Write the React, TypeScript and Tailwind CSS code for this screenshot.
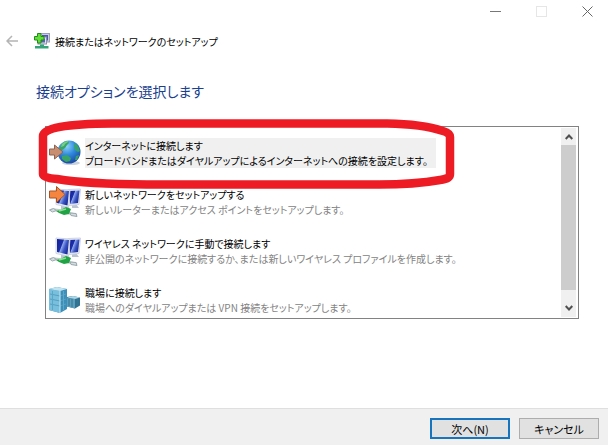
import type { ReactNode } from "react";

function NetworkPlusIcon() {
  return (
    <svg className="h-4 w-4" viewBox="0 0 16 16" aria-hidden="true">
      <rect x="6" y="0.5" width="9.5" height="8.5" fill="#c9cede" stroke="#9a9fb8" />
      <rect x="8" y="2" width="6" height="5.5" fill="#4c55b4" />
      <rect x="4" y="4" width="8.5" height="7" fill="#dfe3ee" stroke="#8a90a8" />
      <rect x="5" y="5.5" width="6" height="4" fill="#5660ba" />
      <path d="M6 11.500h4V13h4.500v2.500H1V13h5z" fill="#35a379" />
      <path d="M3.500.5h3.500v3h3v3.500H7v3H3.500V7h-3V3.500h3z" fill="#63dd39" stroke="#218a1c" />
    </svg>
  );
}

function GlobeIcon() {
  return (
    <svg className="h-8 w-8" viewBox="0 0 32 32" aria-hidden="true">
      <defs>
        <radialGradient id="globe" cx="0.4" cy="0.25" r="0.75">
          <stop offset="0" stopColor="#8fd3f6" />
          <stop offset="0.5" stopColor="#2f8ade" />
          <stop offset="1" stopColor="#1c4aa6" />
        </radialGradient>
      </defs>
      <ellipse cx="22" cy="26" rx="9" ry="2" fill="#c9d3de" />
      <circle cx="20" cy="15" r="11.500" fill="url(#globe)" />
      <path d="M12 8q3-4 7-4l1 2-2 2-2 3-3 2-3 0zM26 6l3 3 2 5-2 1-3-2-1-4zM13 19l5-1 4 3-1 3-4 1-4-3zM27 19l3-1-2 5-2 0z" fill="#38a466" />
      <path d="M13 7q3-3 6-3l0 1-3 2-1 2-3 1z" fill="#75cf86" />
      <path d="M.5 12h5V8l8.500 7-8.500 7v-4h-5z" fill="#c98d70" stroke="#8d6352" />
    </svg>
  );
}

function MonitorsIcon({ arrow = false }: { arrow?: boolean }) {
  return (
    <svg className="h-8 w-8" viewBox="0 -1 32 32" aria-hidden="true">
      <defs>
        <linearGradient id="screen" x1="0" y1="0" x2="1" y2="0.5">
          <stop offset="0" stopColor="#14209a" />
          <stop offset="0.45" stopColor="#1b2ea8" />
          <stop offset="0.52" stopColor="#8ea6ea" />
          <stop offset="0.75" stopColor="#3a55c4" />
          <stop offset="1" stopColor="#1c2f9c" />
        </linearGradient>
      </defs>
      <path d="M23 17h4l3 4h-7z" fill="#b9c3d2" />
      <path d="M19 2.500l12.500-.5-1.500 15.500-10 1z" fill="#e6eaf4" stroke="#cdd4e2" />
      <path d="M20 4l10.500-.5L29 16l-8 1z" fill="url(#screen)" />
      <path d="M12 18h6l3 4h-9z" fill="#b9c3d2" />
      <path d="M7 2l14 1-1.500 17L7 17.500z" fill="#eef1f8" stroke="#cdd4e2" />
      <path d="M8 3l12 1-1.500 14.500L8 16z" fill="url(#screen)" />
      <path d="M2 23q9-1 17 3l9 2" fill="none" stroke="#bfccc7" strokeWidth="2.500" />
      <path d="M7 24l5-1 5-3 5 2-2 5-5 1-5-2z" fill="#21a345" />
      <path d="M10 24l7-2" stroke="#8be391" strokeWidth="1.500" />
      <path d="M.5 23l4-1.500 3 2-4 1.500zM21 26l6 .5 1 3-6-1z" fill="#d5dde0" stroke="#9aa8b0" />
      {arrow && <path d="M.5 4h7V-.5l8.500 8-8.500 8V11h-7z" fill="#f5853f" stroke="#a5552c" />}
    </svg>
  );
}

function ServersIcon() {
  return (
    <svg className="h-8 w-8" viewBox="0 -2 32 32" aria-hidden="true">
      <path d="M18 11l6-1 7 1.500v8l-5 3-8-2z" fill="#2f7292" />
      <path d="M18 12l8 1v9.500l-8-2z" fill="#5a9fbd" />
      <path d="M18 11.500l6-1.500 7 1.500-5 1.500z" fill="#add7e5" />
      <path d="M20 13v7M23 13v8M28.500 13v7" stroke="#37748f" />
      <path d="M0 3l8-2 10 2v20l-7 4-11-3z" fill="#3b8fb9" />
      <path d="M0 3l11 2v22l-11-3z" fill="#78bfde" />
      <path d="M0 3l8-2 10 2-7 2z" fill="#c2e4f1" />
      <path d="M1 8l10 2 6-2M1 13l10 2 6-2M1 18l10 2 6-2" fill="none" stroke="#579fc0" />
      <path d="M3.500 5v19M14.500 5v19" stroke="#5ca6c6" />
      <path d="M11 5v22" stroke="#c6e7f1" />
    </svg>
  );
}

type Option = { title: string; description: string; icon: ReactNode; selected?: boolean };

const options: Option[] = [
  {
    title: "インターネットに接続します",
    description: "ブロードバンドまたはダイヤルアップによるインターネットへの接続を設定します。",
    icon: <GlobeIcon />,
    selected: true,
  },
  {
    title: "新しいネットワークをセットアップする",
    description: "新しいルーターまたはアクセス ポイントをセットアップします。",
    icon: <MonitorsIcon arrow />,
  },
  {
    title: "ワイヤレス ネットワークに手動で接続します",
    description: "非公開のネットワークに接続するか、または新しいワイヤレス プロファイルを作成します。",
    icon: <MonitorsIcon />,
  },
  {
    title: "職場に接続します",
    description: "職場へのダイヤルアップまたは VPN 接続をセットアップします。",
    icon: <ServersIcon />,
  },
];

function OptionItem({ title, description, icon, selected }: Option) {
  return (
    <button type="button" aria-pressed={!!selected} className="flex items-start gap-1 text-left whitespace-nowrap">
      <span className="-my-px shrink-0">{icon}</span>
      <span className={selected ? "bg-[#f0f0f0] pr-2" : ""}>
        <span className="block text-black">{title}</span>
        <span className={selected ? "block text-black" : "block text-[#838383]"}>{description}</span>
      </span>
    </button>
  );
}

function Scrollbar() {
  return (
    <div className="flex w-[15px] shrink-0 flex-col bg-[#f0f0f0]">
      <button type="button" aria-label="上へスクロール" className="flex h-[17px] items-center justify-center">
        <svg className="h-2 w-2" viewBox="0 0 8 8" fill="none" stroke="#505050" strokeWidth="2">
          <path d="M.7 6L4 2.500 7.300 6" />
        </svg>
      </button>
      <div className="flex-1 bg-[#cdcdcd]" />
      <button type="button" aria-label="下へスクロール" className="mt-2 flex h-[19px] items-center justify-center">
        <svg className="h-2 w-2" viewBox="0 0 8 8" fill="none" stroke="#505050" strokeWidth="2">
          <path d="M.7 2L4 5.500 7.300 2" />
        </svg>
      </button>
    </div>
  );
}

export default function App() {
  return (
    <div className="flex min-h-screen flex-col bg-white font-['Noto_Sans_CJK_JP',sans-serif] text-[10px] leading-[15px] text-black [font-feature-settings:'palt']">
      <div className="flex h-[22px] justify-end gap-1">
        <button type="button" aria-label="最小化" className="flex w-[42px] items-center justify-center">
          <svg className="h-[11px] w-[11px]" viewBox="0 0 11 11" stroke="#777">
            <path d="M0 5.500h11" />
          </svg>
        </button>
        <button type="button" aria-label="最大化" disabled className="flex w-[42px] items-center justify-center">
          <svg className="h-[11px] w-[11px]" viewBox="0 0 11 11" fill="none" stroke="#e6e6e6">
            <rect x="0.5" y="0.5" width="10" height="10" />
          </svg>
        </button>
        <button type="button" aria-label="閉じる" className="flex w-[42px] items-center justify-center">
          <svg className="h-[11px] w-[11px]" viewBox="0 0 11 11" stroke="#666">
            <path d="M.5.5l10 10M10.500.5l-10 10" />
          </svg>
        </button>
      </div>

      <header className="mt-[11px] flex h-4 items-center pl-1.5">
        <button type="button" aria-label="戻る" className="mr-4">
          <svg className="h-3 w-3" viewBox="0 0 12 12" fill="none" stroke="#b4b4b4" strokeWidth="1.500">
            <path d="M12 6H1M6 1L1 6l5 5" />
          </svg>
        </button>
        <NetworkPlusIcon />
        <span className="ml-[5px]">接続またはネットワークのセットアップ</span>
      </header>

      <main className="px-9 pt-7">
        <h1 className="text-sm leading-7 text-[#1c3f8e]">接続オプションを選択します</h1>
        <div className="relative mt-[21px] mr-[-7px] ml-[9px]">
          <div className="flex border border-[#828282]">
            <div className="flex min-w-0 flex-1 flex-col items-start gap-[19px] overflow-hidden pt-[11px] pb-[3px] pl-[3px]">
              {options.map((option) => (
                <OptionItem key={option.title} {...option} />
              ))}
            </div>
            <div className="flex pt-px pr-0.5 pb-px">
              <Scrollbar />
            </div>
          </div>
          <svg className="pointer-events-none absolute -top-2 -left-2 h-[72px] w-[420px]" viewBox="0 0 420 72" fill="none" aria-hidden="true">
            <path
              d="M6 18Q6 6 75 5.500H350Q385 6 406 13Q413 15 413 19V56Q413 61 403 62Q375 67 335 66.500H110Q50 66 20 61Q6 60 6 56Z"
              stroke="#ed1c24"
              strokeWidth="8.500"
              strokeLinejoin="round"
            />
          </svg>
        </div>
      </main>

      <footer className="mt-auto flex justify-end gap-[9px] border-t border-[#dfdfdf] bg-[#f0f0f0] pt-[9px] pr-[9px] pb-1.5 text-[11px]">
        <button type="button" className="h-[21px] w-20 border-2 border-[#1874bd] bg-[#e1e1e1] leading-4">
          次へ(N)
        </button>
        <button type="button" className="h-[21px] w-20 border border-[#adadad] bg-[#e1e1e1] leading-4">
          キャンセル
        </button>
      </footer>
    </div>
  );
}
